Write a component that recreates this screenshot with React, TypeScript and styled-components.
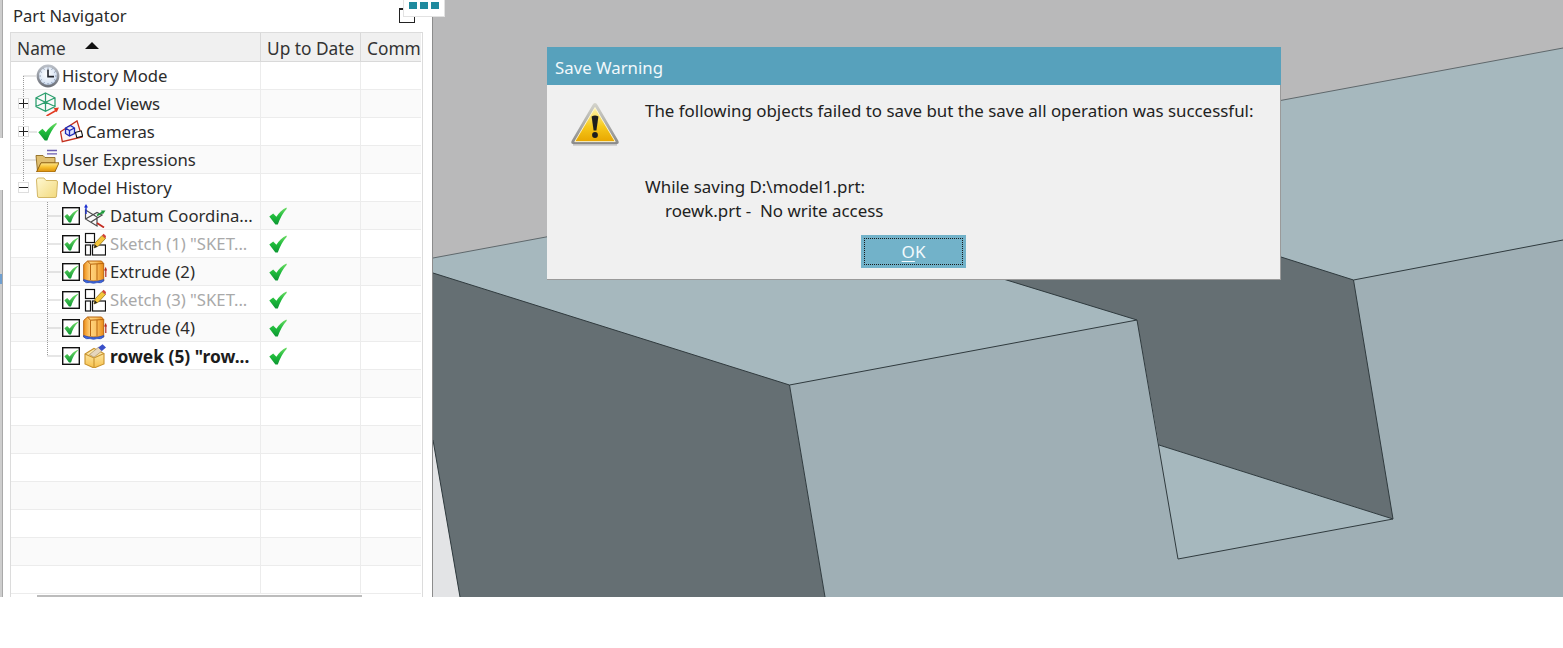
import React from "react";
import styled, { createGlobalStyle } from "styled-components";

const Global = createGlobalStyle`
  html, body { margin: 0; padding: 0; background: #fff; }
  body { font-family: "Noto Sans", "Open Sans", "Liberation Sans", sans-serif; color: #222; overflow: hidden; }
`;

const Page = styled.div`
  position: relative;
  width: 1563px;
  height: 648px;
  background: #fff;
  overflow: hidden;
`;
const Workspace = styled.div`
  display: flex;
  height: 597px;
`;
const Panel = styled.aside`
  flex: 0 0 433px;
  display: flex;
  border-right: 1px solid #8c8c8c;
  box-sizing: border-box;
  background: #fff;
`;
const EdgeStrip = styled.div`
  flex: 0 0 3px;
  display: flex;
  flex-direction: column;
`;
const EdgePiece = styled.div<{ $h: number; $on: boolean; $accent?: boolean }>`
  flex: ${(p) => (p.$h ? `0 0 ${p.$h}px` : "1")};
  background: ${(p) => (p.$accent ? "#6f9fd0" : p.$on ? "#cdcdcd" : "#fff")};
  border-right: 1px solid ${(p) => (p.$on ? "#a9a9a9" : "#fff")};
  box-sizing: border-box;
`;
const PanelMain = styled.div`
  flex: 1;
  min-width: 0;
  padding-left: 7px;
  display: flex;
  flex-direction: column;
`;
const PanelTitle = styled.div`
  height: 32px;
  padding-left: 3px;
  font-size: 16.6px;
  line-height: 31px;
  color: #2a2a2a;
`;
const Table = styled.div`
  position: relative;
  width: 413px;
  height: 565px;
  box-sizing: border-box;
  border: 1px solid #dcdcdc;
  border-bottom: 0;
  padding-right: 1px;
  overflow: hidden;
`;
const HeaderRow = styled.div`
  display: grid;
  grid-template-columns: 250px 100px 60px;
  height: 29px;
  box-sizing: border-box;
  background: #f0f0f0;
  border-bottom: 1px solid #d9d9d9;
`;
const HeaderCell = styled.div`
  display: flex;
  align-items: center;
  gap: 19px;
  padding: 2px 0 0 6px;
  box-sizing: border-box;
  font-size: 17.3px;
  color: #333;
  border-right: 1px solid #d9d9d9;
  white-space: nowrap;
  overflow: hidden;
  &:last-child { border-right: 0; }
`;
const SortArrow = styled.span`
  width: 0;
  height: 0;
  border-left: 7px solid transparent;
  border-right: 7px solid transparent;
  border-bottom: 7px solid #111;
  margin-top: -5px;
`;
const Rows = styled.div`
  position: relative;
`;
const Row = styled.div<{ $alt: boolean }>`
  display: grid;
  grid-template-columns: 250px 100px 60px;
  height: 28px;
  box-sizing: border-box;
  border-bottom: 1px solid #ececec;
  background: ${(p) => (p.$alt ? "#fafafa" : "#fff")};
`;
const Cell = styled.div`
  display: flex;
  align-items: center;
  min-width: 0;
  border-right: 1px solid #ececec;
  &:last-child { border-right: 0; }
`;
const NameCell = styled(Cell)<{ $indent: number }>`
  padding-left: ${(p) => p.$indent}px;
`;
const StatusCell = styled(Cell)`
  padding-left: 8px;
`;
const Expander = styled.span`
  position: relative;
  z-index: 1;
  flex: 0 0 11px;
  height: 11px;
  box-sizing: border-box;
  border: 1px solid #dedede;
  background: #fff;
  margin-right: 6px;
  display: flex;
  align-items: center;
  justify-content: center;
`;
const Slot = styled.span<{ $w: number; $gap: number; $ml?: number }>`
  position: relative;
  z-index: 1;
  flex: 0 0 ${(p) => p.$w}px;
  width: ${(p) => p.$w}px;
  height: 24px;
  margin-left: ${(p) => p.$ml ?? 0}px;
  margin-right: ${(p) => p.$gap}px;
  display: flex;
  align-items: center;
  justify-content: center;
  & > svg { flex: none; }
`;
const Label = styled.span<{ $tone: "normal" | "muted" | "bold" }>`
  font-size: ${(p) => (p.$tone === "bold" ? 17.4 : 16.7)}px;
  white-space: nowrap;
  font-weight: ${(p) => (p.$tone === "bold" ? 700 : 400)};
  color: ${(p) => (p.$tone === "muted" ? "#a9a9a9" : p.$tone === "bold" ? "#1c1c1c" : "#2c2c2c")};
`;
const TreeGuides = styled.svg`
  position: absolute;
  left: 0;
  top: 0;
  pointer-events: none;
`;
const ScrollTrack = styled.div`
  height: 3px;
  padding-left: 26px;
  background: #fff;
`;
const ScrollThumb = styled.div`
  width: 325px;
  height: 2px;
  margin-top: 1px;
  background: #bcbcbc;
`;
const Viewport = styled.div`
  flex: 1;
  min-width: 0;
  position: relative;
`;
const Scene = styled.svg`
  display: block;
  width: 100%;
  height: 100%;
`;
const Dialog = styled.section`
  position: absolute;
  left: 547px;
  top: 47px;
  width: 734px;
  height: 233px;
  box-sizing: border-box;
  background: #f0f0f0;
  border-right: 1px solid #9a9a9a;
  border-bottom: 1px solid #9a9a9a;
  display: flex;
  flex-direction: column;
`;
const DialogTitle = styled.header`
  height: 38px;
  margin-right: -1px;
  background: #57a1bc;
  color: #f1f8fb;
  font-size: 16.8px;
  line-height: 41px;
  padding-left: 8px;
`;
const DialogBody = styled.div`
  flex: 1;
  display: flex;
  padding: 14px 0 0 24px;
  box-sizing: border-box;
`;
const WarningSlot = styled.div`
  flex: 0 0 48px;
  height: 44px;
  margin: 4px 26px 0 0;
`;
const Message = styled.div`
  flex: 1;
  font-size: 16.9px;
  line-height: 24px;
  color: #222;
`;
const MessageLine = styled.div<{ $gap?: number; $inset?: number }>`
  margin-top: ${(p) => p.$gap ?? 0}px;
  padding-left: ${(p) => p.$inset ?? 0}px;
  white-space: pre;
`;
const OkButton = styled.button`
  position: absolute;
  left: 314px;
  top: 188px;
  width: 105px;
  height: 33px;
  box-sizing: border-box;
  padding: 3px;
  border: 0;
  outline: 0;
  background: #72b2c9;
  color: #f2fafd;
  font-family: inherit;
  font-size: 17px;
`;
const OkFace = styled.span`
  display: flex;
  align-items: center;
  justify-content: center;
  height: 100%;
  box-sizing: border-box;
  border: 1px dotted #1a1a1a;
`;
const Underlined = styled.span`
  text-decoration: underline;
  text-underline-offset: 3px;
  text-decoration-thickness: 1px;
`;
const FloatTray = styled.div`
  position: absolute;
  left: 403px;
  top: 0;
  width: 42px;
  height: 17px;
  box-sizing: border-box;
  background: #fff;
  border: 1px solid #e2e2e2;
  border-top: 0;
  display: flex;
  justify-content: center;
  gap: 3px;
  padding-top: 2px;
  z-index: 2;
`;
const TrayDot = styled.span`
  width: 8px;
  height: 7px;
  background: #1f8a9e;
`;
const PinBox = styled.div`
  position: absolute;
  left: 399px;
  top: 8px;
  width: 16px;
  height: 15px;
  box-sizing: border-box;
  border: 1px solid #222;
  border-top-width: 2px;
  z-index: 1;
`;

const Check = ({ s = 18 }: { s?: number }) => (
  <svg width={s} height={s} viewBox="0 0 18 18">
    <defs>
      <linearGradient id="chk" x1="0" y1="0" x2="0" y2="1">
        <stop offset="0" stopColor="#6fdc66" />
        <stop offset="0.5" stopColor="#1fbb3c" />
        <stop offset="1" stopColor="#0c9632" />
      </linearGradient>
    </defs>
    <path d="M0.3 9.6 L4.2 6.4 L7.4 9.8 C9.8 6 13 2.8 17.4 0.6 L17.8 1.8 C14 6 11 11 8.8 17.6 L6.4 17.6 Z" fill="url(#chk)" />
  </svg>
);

const CheckBox = () => (
  <svg width="18" height="18" viewBox="0 0 18 18">
    <defs>
      <linearGradient id="cbx" x1="0" y1="0" x2="0" y2="1">
        <stop offset="0" stopColor="#6fdc66" />
        <stop offset="1" stopColor="#0c9632" />
      </linearGradient>
    </defs>
    <rect x="0.7" y="0.7" width="16.6" height="16.6" fill="#fff" stroke="#111" strokeWidth="1.4" />
    <path d="M2.4 9.2 L5.2 7 L7.6 9.6 C9.4 7 11.8 4.6 15.8 2.8 L16 3.6 C13 6.4 10.8 10.2 9 15.6 L7 15.6 Z" fill="url(#cbx)" />
  </svg>
);

const ClockIcon = () => (
  <svg width="24" height="24" viewBox="0 0 24 24">
    <defs>
      <radialGradient id="clk" cx="0.45" cy="0.4" r="0.7">
        <stop offset="0" stopColor="#ffffff" />
        <stop offset="0.65" stopColor="#d8e4f4" />
        <stop offset="1" stopColor="#86a4cf" />
      </radialGradient>
      <linearGradient id="clr" x1="0" y1="0" x2="0" y2="1">
        <stop offset="0" stopColor="#b9bec6" />
        <stop offset="1" stopColor="#6e727a" />
      </linearGradient>
    </defs>
    <circle cx="12" cy="12" r="10.2" fill="url(#clk)" stroke="url(#clr)" strokeWidth="2.4" />
    <path d="M12 5.5 V12.6 H18" fill="none" stroke="#20242c" strokeWidth="1.6" />
    <path d="M12 3.5v1.2M12 19.3v1.2M3.5 12h1.2M19.3 12h1.2M7.7 4.6l.6 1M16.3 4.6l-.6 1M4.6 7.7l1 .6M19.4 7.7l-1 .6M4.6 16.3l1-.6M7.7 19.4l.6-1M16.3 19.4l-.6-1M19.4 16.3l-1-.6" stroke="#56617a" strokeWidth="0.8" />
  </svg>
);
const ViewsIcon = () => (
  <svg width="24" height="24" viewBox="0 0 24 24" fill="none">
    <path d="M10.5 1 L20 5.8 V14.5 L10.5 19.3 L1 14.5 V5.8 Z M1 5.8 L10.5 10.2 L20 5.8 M10.5 10.2 V19.3 M1 14.5 L10.5 10.2 L20 14.5 M10.5 1 V10.2" stroke="#2c9f6e" strokeWidth="1.25" />
    <path d="M11.5 24 L21 18.5" stroke="#e23a20" strokeWidth="1.5" />
    <path d="M24 15.5 L18.5 16.3 L21.7 20.3 Z" fill="#e23a20" />
  </svg>
);
const CameraIcon = () => (
  <svg width="23" height="24" viewBox="0 0 23 24" fill="none">
    <path d="M0.5 11.7 L17 0.9 L22 17 L2.3 21.7 Z" stroke="#c42f1d" strokeWidth="1.3" fill="#fdf5f2" />
    <path d="M5.5 8 L10.5 5.5 L14.5 8 V13.5 L9.5 16 L5.5 13.5 Z M5.5 8 L9.5 10.5 L14.5 8 M9.5 10.5 V16" stroke="#1f2bb5" strokeWidth="1.3" fill="#dfe4ff" />
    <rect x="16" y="11.5" width="6" height="5.5" fill="#fff" stroke="#111" strokeWidth="1.1" transform="rotate(-14 19 14)" />
  </svg>
);
const OpenFolder = () => (
  <svg width="24" height="24" viewBox="0 0 24 24">
    <defs>
      <linearGradient id="ofd" x1="0" y1="0" x2="0" y2="1">
        <stop offset="0" stopColor="#ffe88c" />
        <stop offset="0.5" stopColor="#f6bd2c" />
        <stop offset="1" stopColor="#d98c0c" />
      </linearGradient>
    </defs>
    <path d="M12 2.5h10M12 5.8h10" stroke="#6a5bb0" strokeWidth="1.3" />
    <path d="M1 7.5 H8 L10 9.5 H20 V15 H6 L2.5 23.5 Z" fill="#e0bf70" stroke="#8f6a1e" strokeWidth="0.9" />
    <path d="M6 14.8 H24 L19.8 24 H1.5 Z" fill="url(#ofd)" stroke="#8a5c0e" strokeWidth="0.9" />
  </svg>
);
const ClosedFolder = () => (
  <svg width="24" height="24" viewBox="0 0 24 24">
    <defs>
      <linearGradient id="cfd" x1="0" y1="0" x2="1" y2="1">
        <stop offset="0" stopColor="#fff8d2" />
        <stop offset="1" stopColor="#f2d97c" />
      </linearGradient>
    </defs>
    <path d="M1.5 4 Q1.5 2 3.5 2 H9 L11 4.5 H21 Q22.5 4.5 22.5 6 L21.5 20 Q21.5 21.5 20 21.5 H4 Q2.5 21.5 2.5 20 Z" fill="url(#cfd)" stroke="#d3b766" strokeWidth="1" />
  </svg>
);
const DatumIcon = () => (
  <svg width="22" height="24" viewBox="0 0 22 24" fill="none">
    <path d="M1.5 6 L13 13 V22 L1.5 15 Z M1.5 15 L13 8.5 L18 11 L7 18" stroke="#4c4c4c" strokeWidth="1.2" />
    <path d="M2 10 V2.5" stroke="#1a2fd0" strokeWidth="1.4" />
    <path d="M2 0 L0 3.4 H4 Z" fill="#1a2fd0" />
    <path d="M13 11.5 L19 8" stroke="#1f9a3c" strokeWidth="1.6" />
    <path d="M21.5 6.6 L17 6.4 L18.8 10.4 Z" fill="#1f9a3c" />
    <path d="M13 19 L20 23.5" stroke="#c32a20" strokeWidth="1.8" />
  </svg>
);
const SketchIcon = () => (
  <svg width="22" height="24" viewBox="0 0 22 24" fill="none">
    <rect x="1.5" y="1.5" width="9" height="9" fill="#fff" stroke="#111" strokeWidth="1.2" />
    <rect x="1.5" y="13" width="5" height="10" fill="#fff" stroke="#111" strokeWidth="1.2" />
    <rect x="8.5" y="13" width="13" height="10" fill="#fff" stroke="#111" strokeWidth="1.2" />
    <path d="M10 16 L11 11 L18 3.5 L21.5 6.5 L14.5 14 Z" fill="#f5c63a" stroke="#8a6a10" strokeWidth="0.7" />
    <path d="M18 3.5 L19.6 1.8 L22 4 L21.5 6.5 Z" fill="#d2453a" />
    <path d="M10 16 L11 12.6 L13.4 14.8 Z" fill="#222" />
  </svg>
);
const ExtrudeIcon = () => (
  <svg width="24" height="24" viewBox="0 0 24 24" fill="none">
    <defs>
      <linearGradient id="ext" x1="0" y1="0" x2="1" y2="0">
        <stop offset="0" stopColor="#ee8f18" />
        <stop offset="0.33" stopColor="#ffd27e" />
        <stop offset="0.62" stopColor="#fbc566" />
        <stop offset="1" stopColor="#ea8a14" />
      </linearGradient>
    </defs>
    <path d="M0.7 4.5 L4.5 1 H18.5 L20.7 3.5 V21 H0.7 Z" fill="url(#ext)" stroke="#b8650f" strokeWidth="1" />
    <path d="M4.5 1 L7.5 4.2 V20 M7.5 4.2 L20.7 3.5 M14 4 V20" stroke="#b8650f" strokeWidth="1" />
    <path d="M0.7 19.5 Q10.5 23.5 20.7 19.5 V21 Q18 23.6 14 22.6 Q10.5 24 7 22.6 Q3 23.6 0.7 21 Z" fill="#3d68e2" stroke="#2747b0" strokeWidth="0.7" />
    <path d="M22.8 17 V9.5" stroke="#b5281e" strokeWidth="1.2" />
    <path d="M22.8 6.8 L21 10.4 H24 Z" fill="#b5281e" />
  </svg>
);
const GrooveIcon = () => (
  <svg width="22" height="24" viewBox="0 0 22 24" fill="none">
    <defs>
      <linearGradient id="grv" x1="0" y1="0" x2="0" y2="1">
        <stop offset="0" stopColor="#fff2bd" />
        <stop offset="1" stopColor="#f6c04a" />
      </linearGradient>
    </defs>
    <path d="M1 10 L10 4.5 L20 9.5 V20 L10 24 L1 20 Z" fill="url(#grv)" stroke="#c8932e" strokeWidth="1.1" />
    <path d="M1 10 L10 14 L20 9.5 M10 14 V24" stroke="#c8932e" strokeWidth="1.1" />
    <path d="M5.5 10.5 L14.5 3.2 L18 6.8 L10 13.2 Z" fill="#e6d6bd" stroke="#a98f66" strokeWidth="0.7" />
    <path d="M14.2 3.6 L18.6 0.2 L22 3.4 L17.8 7 Z" fill="#3a50c8" />
  </svg>
);
const Sign = ({ minus }: { minus?: boolean }) => (
  <svg width="9" height="9" viewBox="0 0 9 9">
    <path d={minus ? "M0 4.5H9" : "M0 4.5H9M4.5 0V9"} stroke="#222" strokeWidth="1" />
  </svg>
);

const WarningIcon = () => (
  <svg width="48" height="44" viewBox="0 0 48 44">
    <defs>
      <linearGradient id="wfill" x1="0" y1="0" x2="0" y2="1">
        <stop offset="0" stopColor="#fff6b0" />
        <stop offset="0.55" stopColor="#f6c91c" />
        <stop offset="1" stopColor="#e8a600" />
      </linearGradient>
      <linearGradient id="wrim" x1="0" y1="0" x2="0" y2="1">
        <stop offset="0" stopColor="#d4d4cc" />
        <stop offset="1" stopColor="#8a8a8a" />
      </linearGradient>
    </defs>
    <path d="M24 0 Q25.5 0 26.5 2 L47.2 37.5 Q48.8 41 45.5 41 H2.5 Q-0.8 41 0.8 37.5 L21.5 2 Q22.5 0 24 0 Z" fill="url(#wrim)" />
    <path d="M24 4.5 L44.2 38.6 H3.8 Z" fill="url(#wfill)" stroke="#fff8d8" strokeWidth="0.9" />
    <path d="M20.6 13.5 Q24 11.6 27.4 13.5 L25.4 27.5 H22.6 Z" fill="#1d1d1d" />
    <circle cx="24" cy="32" r="2.9" fill="#1d1d1d" />
    <path d="M2 41.8 H46" stroke="#b5b5b5" strokeWidth="1.2" />
  </svg>
);

type RowData = {
  text: string;
  tone?: "normal" | "muted" | "bold";
  expander?: "plus" | "minus";
  icon: React.ReactNode;
  status?: boolean;
  child?: boolean;
  precheck?: boolean;
  iconMl?: number;
};

const rows: RowData[] = [
  { text: "History Mode", icon: <ClockIcon />, iconMl: 1 },
  { text: "Model Views", expander: "plus", icon: <ViewsIcon /> },
  { text: "Cameras", expander: "plus", icon: <CameraIcon />, precheck: true },
  { text: "User Expressions", icon: <OpenFolder /> },
  { text: "Model History", expander: "minus", icon: <ClosedFolder /> },
  { text: "Datum Coordina...", icon: <DatumIcon />, child: true, status: true },
  { text: 'Sketch (1) "SKET...', tone: "muted", icon: <SketchIcon />, child: true, status: true },
  { text: "Extrude (2)", icon: <ExtrudeIcon />, child: true, status: true },
  { text: 'Sketch (3) "SKET...', tone: "muted", icon: <SketchIcon />, child: true, status: true },
  { text: "Extrude (4)", icon: <ExtrudeIcon />, child: true, status: true },
  { text: 'rowek (5) "row...', tone: "bold", icon: <GrooveIcon />, child: true, status: true },
];
const allRows: (RowData | null)[] = [...rows, ...Array.from({ length: 8 }, () => null)];

const NameContent = ({ r }: { r: RowData }) => {
  if (r.child) {
    return (
      <NameCell $indent={51}>
        <Slot $w={18} $gap={4}><CheckBox /></Slot>
        <Slot $w={22} $gap={4}>{r.icon}</Slot>
        <Label $tone={r.tone ?? "normal"}>{r.text}</Label>
      </NameCell>
    );
  }
  return (
    <NameCell $indent={7}>
      {r.expander ? (
        <Expander><Sign minus={r.expander === "minus"} /></Expander>
      ) : (
        <Slot $w={11} $gap={6} />
      )}
      {r.precheck ? (
        <>
          <Slot $w={19} $gap={3} $ml={3}><Check s={19} /></Slot>
          <Slot $w={23} $gap={3}>{r.icon}</Slot>
        </>
      ) : (
        <Slot $w={24} $gap={r.iconMl ? 2 : 3} $ml={r.iconMl}>{r.icon}</Slot>
      )}
      <Label $tone={r.tone ?? "normal"}>{r.text}</Label>
    </NameCell>
  );
};

export default function App() {
  return (
    <Page>
      <Global />
      <Workspace>
        <Panel>
          <EdgeStrip>
            <EdgePiece $h={138} $on />
            <EdgePiece $h={52} $on={false} />
            <EdgePiece $h={84} $on />
            <EdgePiece $h={10} $on $accent />
            <EdgePiece $h={0} $on />
          </EdgeStrip>
          <PanelMain>
            <PanelTitle>Part Navigator</PanelTitle>
            <Table>
              <HeaderRow>
                <HeaderCell>Name<SortArrow /></HeaderCell>
                <HeaderCell>Up to Date</HeaderCell>
                <HeaderCell>Comm</HeaderCell>
              </HeaderRow>
              <Rows>
                {allRows.map((r, i) => (
                  <Row key={i} $alt={i % 2 === 1}>
                    {r ? <NameContent r={r} /> : <Cell />}
                    <StatusCell>{r?.status && <Check />}</StatusCell>
                    <Cell />
                  </Row>
                ))}
                <TreeGuides width="250" height="320">
                  <path
                    d="M12.5 14 V126 M12.5 14 H25 M12.5 42 H18 M12.5 70 H26 M12.5 98 H25 M12.5 126 H18 M36.5 140 V294 M36.5 154 H50 M36.5 182 H50 M36.5 210 H50 M36.5 238 H50 M36.5 266 H50 M36.5 294 H50"
                    fill="none"
                    stroke="#9a9a9a"
                    strokeWidth="1"
                    strokeDasharray="1 1"
                  />
                </TreeGuides>
              </Rows>
              <ScrollTrack><ScrollThumb /></ScrollTrack>
            </Table>
          </PanelMain>
        </Panel>
        <Viewport>
          <Scene viewBox="433 0 1130 597" preserveAspectRatio="none">
            <rect x="433" y="0" width="1130" height="597" fill="#b9b9ba" />
            <path d="M433 258 L1563 48 V250 L1354 280 L1137 320 L790 385 L433 273 Z" fill="#a6b8be" />
            <path d="M433 440 L460 597 H433 Z" fill="#e3e4e6" />
            <path d="M433 273 L789.5 385 L825 597 H460 L433 440 Z" fill="#656f73" />
            <path d="M789.5 385 L1137 320 L1159 445 L1178 559 L1393 519 L1353.5 280 L1563 240 V597 H825 Z" fill="#9fafb5" />
            <path d="M1000 278 L1000 230 L1281 257 L1353.5 280 L1393 519 L1159 445 L1137 320 Z" fill="#656f73" />
            <path d="M1159 445 L1393 519 L1178 559 Z" fill="#a6b8be" />
            <g fill="none" stroke="#2f3a3e" strokeWidth="1">
              <path d="M433 258 L1563 48" stroke="#5f686c" />
              <path d="M433 273 L789.5 385 L825 597" />
              <path d="M789.5 385 L1137 320 L1178 559 L1393 519 L1353.5 280 L1563 240" />
              <path d="M1137 320 L1000 278" />
              <path d="M1281 257 L1353.5 280" />
              <path d="M1159 445 L1393 519" />
              <path d="M433 440 L460 597" />
            </g>
          </Scene>
        </Viewport>
      </Workspace>
      <PinBox />
      <FloatTray><TrayDot /><TrayDot /><TrayDot /></FloatTray>
      <Dialog>
        <DialogTitle>Save Warning</DialogTitle>
        <DialogBody>
          <WarningSlot><WarningIcon /></WarningSlot>
          <Message>
            <MessageLine>The following objects failed to save but the save all operation was successful:</MessageLine>
            <MessageLine $gap={52}>While saving D:\model1.prt:</MessageLine>
            <MessageLine $inset={20}>{"roewk.prt -  No write access"}</MessageLine>
          </Message>
        </DialogBody>
        <OkButton type="button"><OkFace><Underlined>O</Underlined>K</OkFace></OkButton>
      </Dialog>
    </Page>
  );
}
